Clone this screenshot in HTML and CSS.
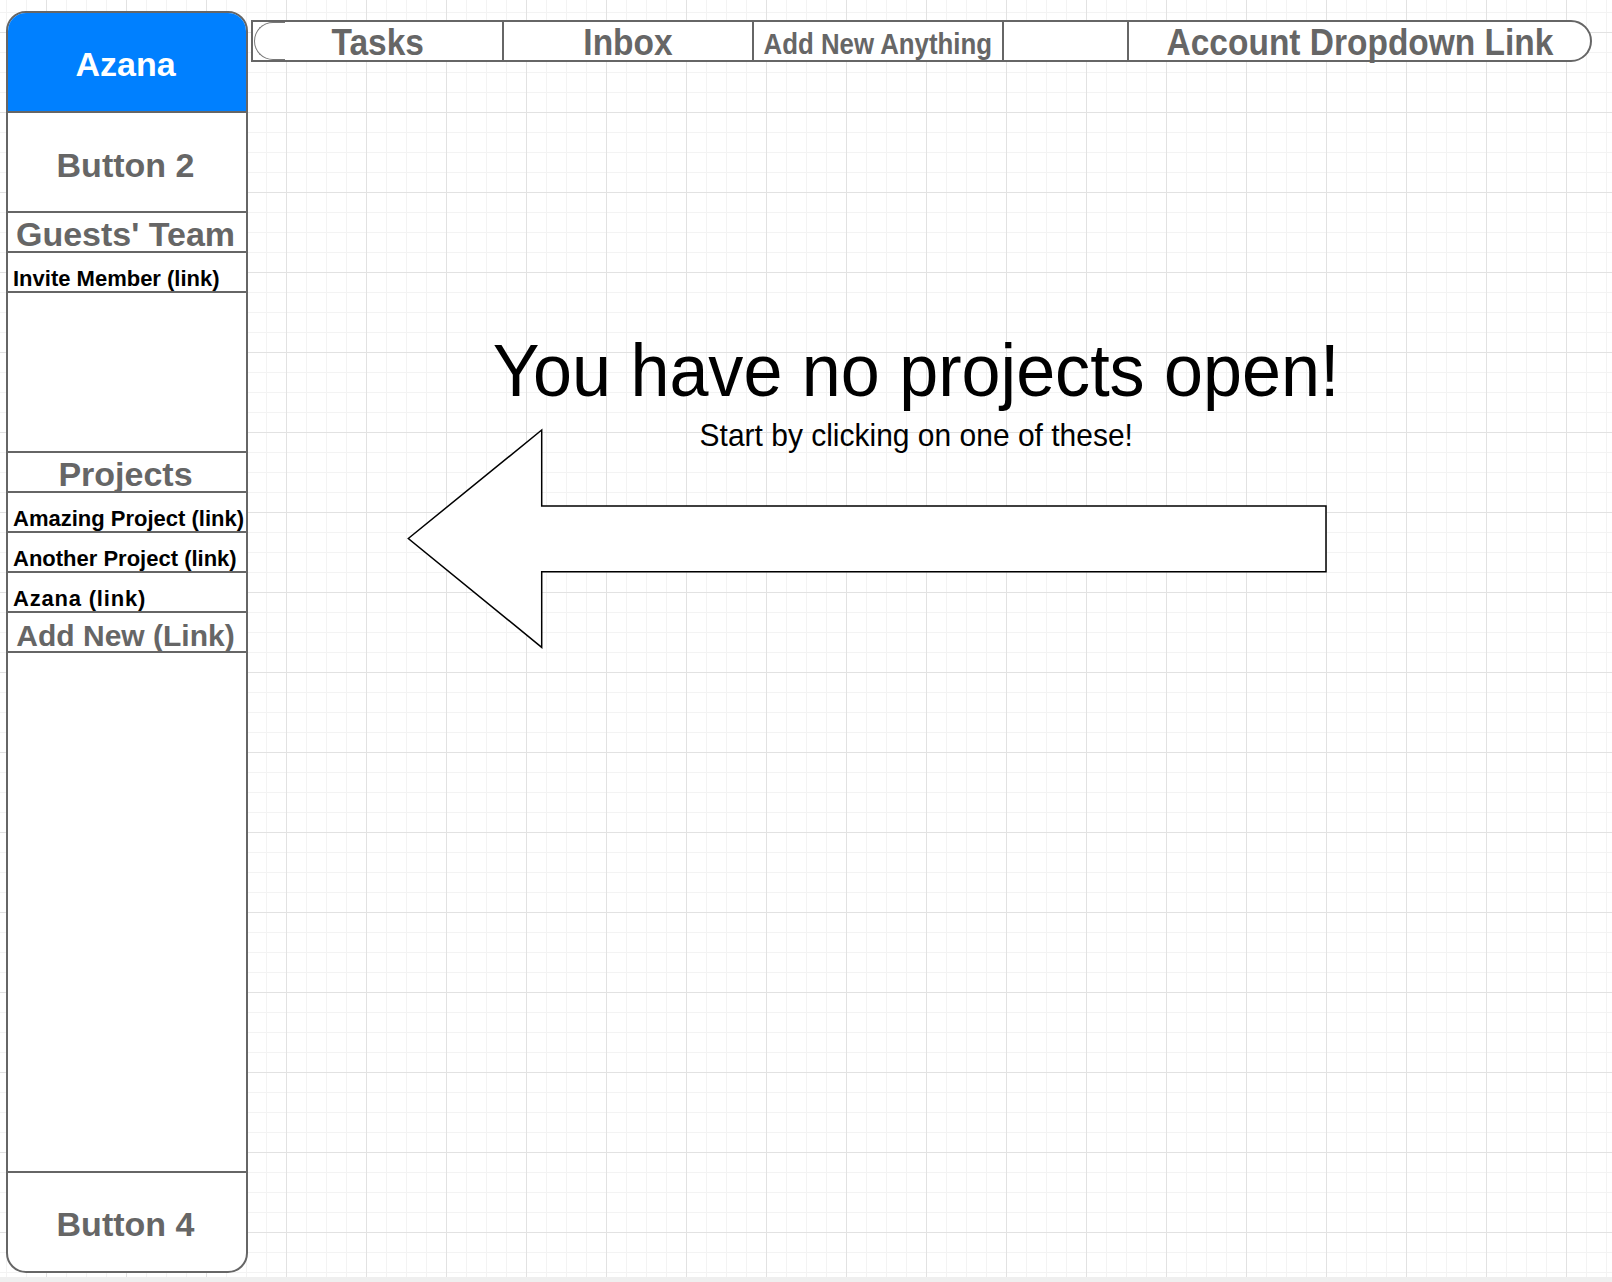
FILE: index.html
```html
<!DOCTYPE html>
<html lang="en">
<head>
<meta charset="utf-8">
<title>Azana</title>
<link rel="stylesheet" href="styles.css">
</head>
<body>
<div class="canvas">
  <aside class="sidebar">
    <div class="sb-brand">Azana</div>
    <div class="sb-button">Button 2</div>
    <div class="sb-heading">Guests' Team</div>
    <div class="sb-link">Invite Member (link)</div>
    <div class="sb-space sb-space-team"></div>
    <div class="sb-heading sb-projects">Projects</div>
    <div class="sb-link">Amazing Project (link)</div>
    <div class="sb-link">Another Project (link)</div>
    <div class="sb-link sb-link-wide">Azana (link)</div>
    <div class="sb-heading sb-add">Add New (Link)</div>
    <div class="sb-space sb-space-fill"></div>
    <div class="sb-button sb-button-last">Button 4</div>
  </aside>
  <main class="main">
    <nav class="topnav">
      <a class="nav-item nav-tasks"><span class="nav-label">Tasks</span></a>
      <a class="nav-item nav-inbox"><span class="nav-label">Inbox</span></a>
      <a class="nav-item nav-add"><span class="nav-label nav-label-small">Add New Anything</span></a>
      <a class="nav-item nav-empty"></a>
      <a class="nav-item nav-account"><span class="nav-label">Account Dropdown Link</span></a>
    </nav>
    <section class="stage">
      <h1 class="empty-title"><span>You have no projects open!</span></h1>
      <p class="empty-sub"><span>Start by clicking on one of these!</span></p>
      <svg class="pointer-arrow" width="922" height="222" viewBox="406 428 922 222" aria-hidden="true">
        <polygon points="408.3,538.5 541.7,430 541.7,506 1326,506 1326,571.8 541.7,571.8 541.7,647.3" fill="#fff" stroke="#000" stroke-width="1.5" stroke-linejoin="miter"/>
      </svg>
    </section>
  </main>
</div>
<div class="bottom-strip"></div>
</body>
</html>
```
FILE: styles.css
```css
html, body {
  margin: 0;
  padding: 0;
}

body {
  width: 1612px;
  font-family: "Liberation Sans", Arial, sans-serif;
  background: #fff;
}

.canvas {
  height: 1277px;
  box-sizing: border-box;
  padding: 11px 0 0 6px;
  display: flex;
  align-items: flex-start;
  background-color: #fff;
  background-image:
    linear-gradient(to right, #e2e2e2 1px, transparent 1px),
    linear-gradient(to bottom, #e2e2e2 1px, transparent 1px),
    linear-gradient(to right, #f3f3f3 1px, transparent 1px),
    linear-gradient(to bottom, #f3f3f3 1px, transparent 1px);
  background-size: 80px 80px, 80px 80px, 20px 20px, 20px 20px;
  background-position: 46px 32px, 46px 32px, 6px 12px, 6px 12px;
}

/* ---------- sidebar ---------- */
.sidebar {
  flex: none;
  width: 242px;
  height: 1262px;
  box-sizing: border-box;
  border: 2px solid #666;
  border-radius: 20px;
  overflow: hidden;
  background: #fff;
  display: flex;
  flex-direction: column;
}

.sidebar > div {
  flex: none;
  border-bottom: 2px solid #666;
}

.sidebar > div:last-child {
  border-bottom: 0;
}

.sb-brand {
  height: 94px;
  padding: 4px 3px 0 0;
  background: #0080ff;
  color: #fff;
  font-weight: bold;
  font-size: 34px;
  display: flex;
  align-items: center;
  justify-content: center;
}

.sb-button {
  height: 92px;
  padding: 6px 3px 0 0;
  color: #666;
  font-weight: bold;
  font-size: 34px;
  display: flex;
  align-items: center;
  justify-content: center;
}

.sb-button-last {
  height: 94px;
  padding-top: 4px;
}

.sb-heading {
  height: 33px;
  padding: 5px 3px 0 0;
  color: #666;
  font-weight: bold;
  font-size: 34px;
  display: flex;
  align-items: center;
  justify-content: center;
  white-space: nowrap;
}

.sb-projects {
  font-size: 34px;
}

.sb-add {
  font-size: 30px;
  height: 31px;
  padding-top: 7px;
}

.sb-link {
  height: 24px;
  padding: 14px 0 0 5px;
  color: #000;
  font-weight: bold;
  font-size: 22px;
  display: flex;
  align-items: center;
  white-space: nowrap;
}

.sb-link-wide {
  letter-spacing: 0.8px;
}

.sb-space-team {
  height: 158px;
}

.sidebar > .sb-space-fill {
  flex: 1;
}

/* ---------- main ---------- */
.main {
  flex: none;
  margin-left: 3px;
  width: 1341px;
  display: flex;
  flex-direction: column;
}

.topnav {
  margin-top: 9px;
  height: 38px;
  border: 2px solid #666;
  border-radius: 0 21px 21px 0;
  background: #fff;
  display: flex;
}

.nav-item {
  position: relative;
  flex: none;
  display: flex;
  align-items: center;
  justify-content: center;
  padding-top: 4px;
  border-left: 2px solid #666;
  color: #666;
  font-weight: bold;
  font-size: 36px;
  white-space: nowrap;
  text-decoration: none;
}

.nav-tasks {
  width: 249px;
  border-left: 0;
}

.nav-tasks::before {
  content: "";
  position: absolute;
  left: 1px;
  top: 0;
  bottom: 0;
  width: 30px;
  border: 1.5px solid #777;
  border-right: 0;
  border-radius: 19px 0 0 19px;
}

.nav-inbox,
.nav-add {
  width: 248px;
}

.nav-empty {
  width: 123px;
}

.nav-account {
  width: 461px;
}

.nav-label {
  display: inline-block;
  transform: scaleX(0.93);
}

.nav-label-small {
  margin-top: 2px;
  font-size: 30px;
  transform: scaleX(0.86);
}

.stage {
  position: relative;
  padding-right: 10px;
}

.empty-title {
  margin: 272px 0 0;
  font-size: 74px;
  line-height: 74px;
  font-weight: normal;
  color: #000;
  text-align: center;
  white-space: nowrap;
}

.empty-sub {
  margin: 11px 0 0;
  font-size: 32px;
  line-height: 32px;
  color: #000;
  text-align: center;
  white-space: nowrap;
}

.empty-title span {
  display: inline-block;
  transform: scaleX(0.947);
}

.empty-sub span {
  display: inline-block;
  transform: scaleX(0.937);
}

.pointer-arrow {
  position: absolute;
  left: 155px;
  top: 366px;
}

.bottom-strip {
  height: 5px;
  background: #efefef;
}
```
